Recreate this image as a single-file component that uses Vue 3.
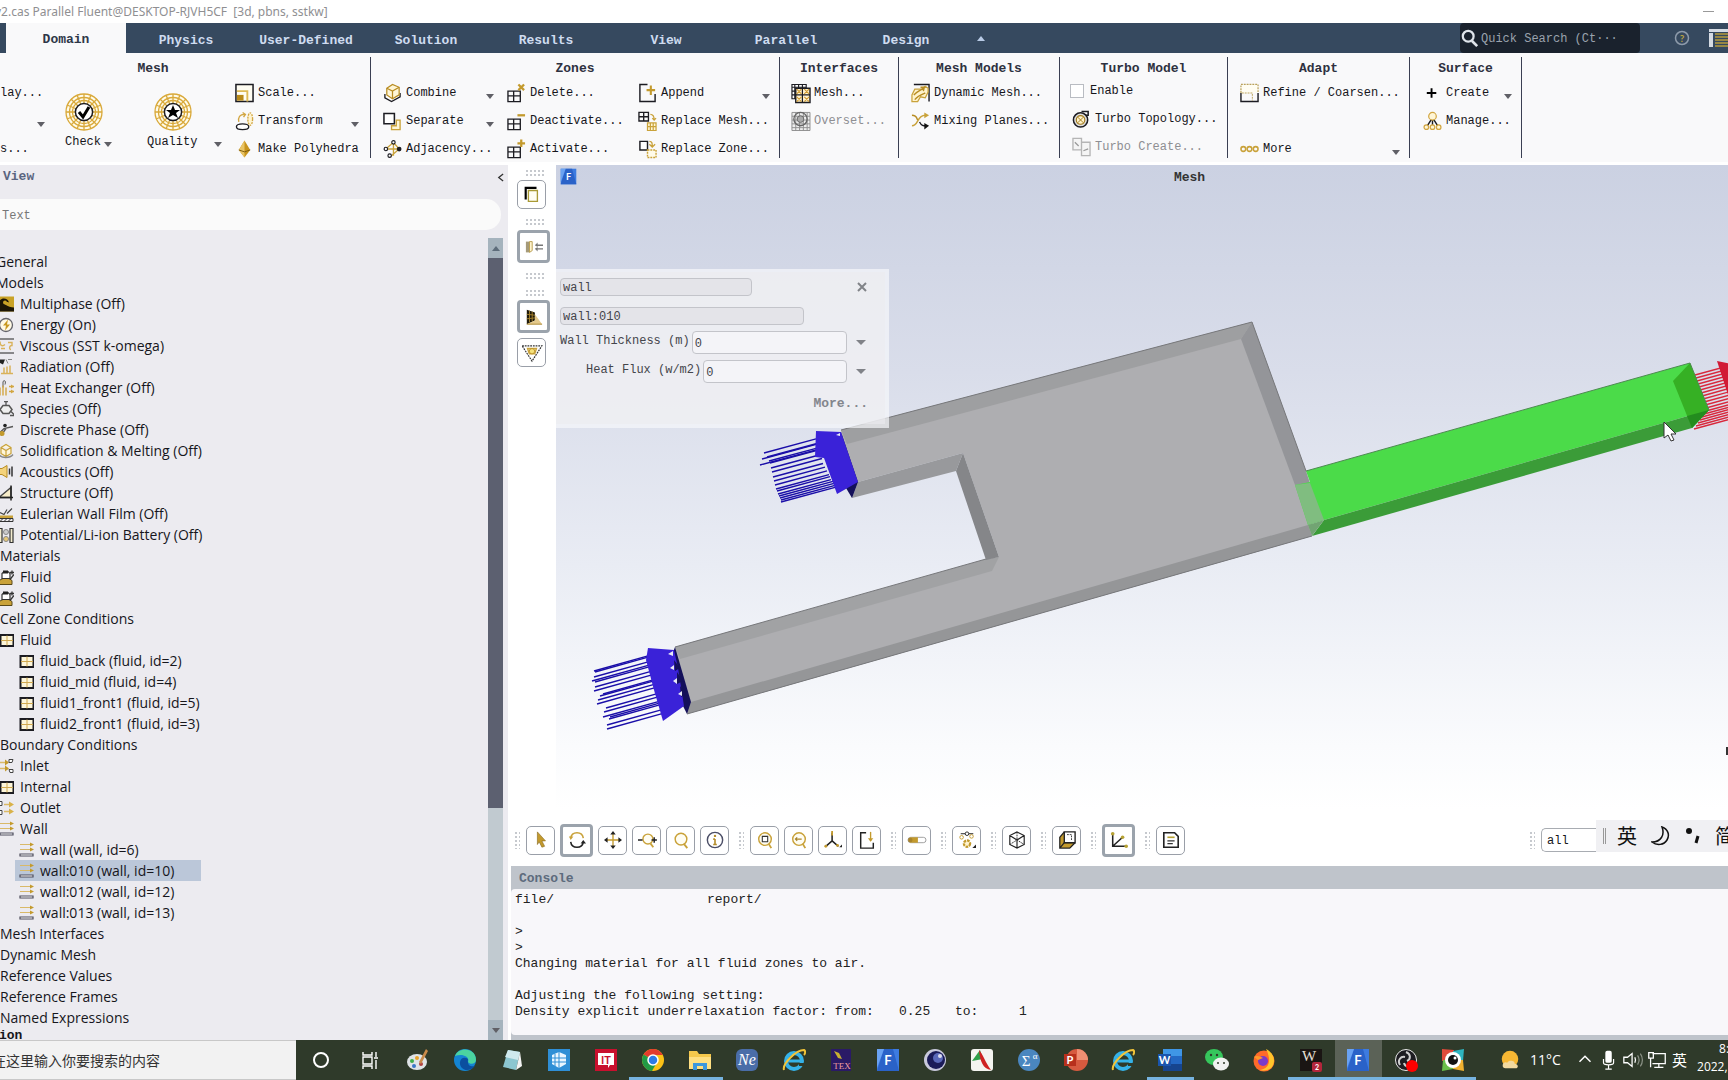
<script setup>
import { ref } from 'vue'

const tabs = ['Domain', 'Physics', 'User-Defined', 'Solution', 'Results', 'View', 'Parallel', 'Design']
const activeTab = ref('Domain')

const G = '#c39a2d'
const K = '#1c1c22'
const grid4 = `<path d="M1 8h13v11H1zM1 13h13M7 8v11" fill="none" stroke="${K}" stroke-width="1.4"/>`
const web = `<g fill="#fffbe9" stroke="#d9a93a" stroke-width="1.3"><ellipse cx="19" cy="19" rx="18" ry="18"/><circle cx="19" cy="19" r="14.5"/><circle cx="19" cy="19" r="11.5"/><path d="M19 1v36M1 19h36M6 6l26 26M32 6L6 32M12 2l14 34M26 2L12 36M2 12l34 14M2 26l34-14"/></g><circle cx="19" cy="19" r="8.6" fill="#fff" stroke="${K}" stroke-width="1.5"/>`
const cell = `<path d="M1.5 2.500h13v11h-13z" fill="#fdf6da" stroke="${K}" stroke-width="2"/><path d="M8 3v10M2 8h12" stroke="#d0a850"/>`
const flask = `<path d="M0 15v-4l4-2h6l3 2v4z" fill="#c9a23a" stroke="#5a4a1a"/><path d="M3 9V4l2-2h4l2 2v5z" fill="#fff" stroke="#333" stroke-width="1.2"/><path d="M4 1h5v3H4z" fill="#222"/><path d="M11 10l4-5M11 3h4M13 1v4" stroke="#333" stroke-width="1.3"/>`
const wallIcon = `<path d="M1 2h11M1 7h11" stroke="#d9b968" stroke-width="1.2"/><path d="M11 0l4 2-4 2zM11 5l4 2-4 2z" fill="${G}"/><path d="M1 11.500h13v2H1z" fill="#fff" stroke="#4c4c5c" stroke-width="1.2"/>`
const fluent = `<path d="M1 1h22v22H1z" fill="#3d7be0"/><path d="M1 23L8 1h9l6 22z" fill="#2a62c8"/><path d="M1 1h7L1 20z" fill="#6aa2f2"/><text x="12" y="17" font-size="13" font-weight="700" text-anchor="middle" fill="#fff" font-family="Lato, sans-serif">F</text>`
const icons = {
  check: web + `<path d="M14 19l4 5 6-10" fill="none" stroke="#000" stroke-width="3"/>`,
  quality: web + `<path d="M19 12l2 5h5l-4 3 2 5-5-3-5 3 2-5-4-3h5z" fill="#000"/>`,
  scale: `<path d="M1 1h18v18H1z" fill="#fffdf2" stroke="${K}" stroke-width="1.6"/><path d="M2 8h11v11" fill="none" stroke="#e0bb55" stroke-width="2"/><path d="M2 12h7v6H2z" fill="#b98a18"/>`,
  transform: `<ellipse cx="8" cy="16" rx="6.500" ry="3" fill="#fff" stroke="${K}" stroke-width="1.4"/><path d="M4 11c-1-5 1-8 6-8M8 1l3 2-2 3" fill="none" stroke="#d2a642" stroke-width="1.400"/><ellipse cx="16" cy="8" rx="2.500" ry="6.500" fill="#fff4cf" stroke="#d2a642" stroke-width="1.400" stroke-dasharray="2 1"/>`,
  poly: `<path d="M10 1l6 10-6 8-6-8z" fill="#c8941c"/><path d="M10 1v18L4 11z" fill="#e9c465"/><path d="M4 11l6 2 6-2" fill="none" stroke="#7b5a0c"/>`,
  combine: `<path d="M2 11v4l7 4 9-5v-4" fill="#fff" stroke="${K}" stroke-width="1.4"/><path d="M4 5l6-4 7 3v8l-7 4-6-4z" fill="#fff6d6" stroke="#b88c22" stroke-width="1.300"/><path d="M4 5l6 3 7-4M10 8v8" fill="none" stroke="#b88c22" stroke-width="1.300"/>`,
  separate: `<path d="M1 2h11v11H1z" fill="#fff" stroke="${K}" stroke-width="1.6"/><path d="M14 9h4v10H9v-4h5z" fill="#fff6d6" stroke="#c9a23a" stroke-width="1.400"/>`,
  adjacency: `<path d="M3 10h14M11 3v14M3 10l8-7 6 7-9 8" fill="none" stroke="#c9a23a" stroke-width="1.400"/><g fill="#fff" stroke="${K}" stroke-width="1.2"><circle cx="3" cy="10" r="1.800"/><circle cx="11" cy="3" r="1.800"/><circle cx="7" cy="17" r="1.800"/></g><circle cx="17" cy="10" r="2.500" fill="${K}"/>`,
  delete: grid4 + `<path d="M12 1l6 6M18 1l-6 6" stroke="${G}" stroke-width="2.4"/>`,
  deactivate: grid4 + `<path d="M11 4h8" stroke="${G}" stroke-width="2.4"/>`,
  activate: grid4 + `<path d="M11 4h8M15 0v8" stroke="${G}" stroke-width="2.4"/>`,
  append: `<path d="M10 1H2v18h16v-8" fill="none" stroke="${K}" stroke-width="1.5"/><path d="M9 7h9M13.500 2v10" stroke="${G}" stroke-width="2.200"/>`,
  replaceMesh: `<path d="M1 1h10v9H1zM1 5.500h10M6 1v9" fill="none" stroke="${K}" stroke-width="1.4"/><path d="M10 12h9v8h-9zM10 16h9M13 12v8M16 12v8" fill="#fff6d6" stroke="#c9a23a" stroke-width="1.300"/><path d="M13 3c3 0 4 2 4 6M15 7l2 2 2-2" fill="none" stroke="#c9a23a" stroke-width="1.300"/>`,
  replaceZone: `<path d="M2 2h8v9H2z" fill="#fff" stroke="${K}" stroke-width="1.5"/><path d="M10 11h9v8h-9z" fill="#fffbe9" stroke="#c9a23a" stroke-width="1.500" stroke-dasharray="2 1"/><path d="M12 2c3 0 3 2 3 6M12 5l3 3 3-3" fill="none" stroke="#c9a23a" stroke-width="1.400"/>`,
  ifMesh: `<path d="M1 1h15v15H1zM1 4h15M1 8h15M4 1v15M8 1v15M12 1v15M1 12h15" fill="#fff" stroke="${K}" stroke-width="1.200"/><path d="M5 5h15v15H5z" fill="#fff3d2" stroke="${K}" stroke-width="1.500"/><path d="M5 12h15M12 5v15" stroke="${K}" stroke-width="1.3"/><path d="M6 6l5 5M11 6l-5 5M14 6l5 5M19 6l-5 5M6 14l5 5M11 14l-5 5M14 14l5 5M19 14l-5 5" stroke="#cf9a30" stroke-width="1.100"/>`,
  overset: `<path d="M1 1h19v19H1zM1 5h19M1 9h19M1 13h19M1 17h19M5 1v19M9 1v19M13 1v19M17 1v19" fill="#eee" stroke="#8e8e8e"/><circle cx="10" cy="8" r="7" fill="none" stroke="#666" stroke-width="1.4"/><circle cx="10" cy="8" r="3.500" fill="#aaa" stroke="#666"/>`,
  dynamic: `<path d="M3 1h16v18" fill="none" stroke="${K}" stroke-width="1.5"/><path d="M1 19v-7l3-6h7l4-3 3 2v4l-3 6-5-1-3 5z" fill="#fff3cc" stroke="#c9a23a" stroke-width="1.300"/><path d="M3 12C7 8 9 8 13 5M10 4l4 0-1 4M4 17c3-4 6-5 11-7" fill="none" stroke="#b88c22" stroke-width="1.500"/>`,
  mixing: `<path d="M1 15C8 15 6 4 15 4" fill="none" stroke="#c9a23a" stroke-width="1.600"/><path d="M1 4c5 0 5 3 6 5" fill="none" stroke="#b88c22" stroke-width="1.500"/><path d="M9 11c2 4 4 4 7 4" fill="none" stroke="${K}" stroke-width="1.4"/><path d="M14 1l5 3-5 3z" fill="#c9a23a"/><path d="M14 12l5 3-5 4z" fill="#111"/>`,
  turbo: `<path d="M10 2h7v4h-3" fill="#fff" stroke="${K}" stroke-width="1.6"/><circle cx="9" cy="11" r="7.500" fill="#ddd" stroke="${K}" stroke-width="1.6"/><circle cx="9" cy="11" r="4.500" fill="#fff3cc" stroke="#a37a1a" stroke-width="1.2"/><path d="M6 8l6 6M12 8l-6 6" stroke="#a37a1a"/>`,
  turboCreate: `<path d="M1 1h9v12H1zM10 5h9v14h-9z" fill="#f5f5f5" stroke="#b5b5b5" stroke-width="1.4"/><path d="M3 5l4 4M12 14l5-2" stroke="#999" stroke-width="1.3"/>`,
  refine: `<path d="M1 10V1h18v9" fill="#fffdf2" stroke="#b9a15a" stroke-width="1.3" stroke-dasharray="2 1"/><path d="M1 10v9h18v-9" fill="none" stroke="${K}" stroke-width="1.5"/><path d="M2 10h11v8" fill="none" stroke="#b9a15a" stroke-dasharray="2 1"/>`,
  more: `<g fill="none" stroke="#c9a23a" stroke-width="1.6"><circle cx="3.500" cy="10" r="2.500"/><circle cx="10" cy="10" r="2.500"/><circle cx="16.500" cy="10" r="2.500"/></g>`,
  plus: `<path d="M4 10h10M9 5v10" stroke="#000" stroke-width="2"/>`,
  manage: `<path d="M9 8l-5 8M11 8l5 8M10 8v8" stroke="${K}" stroke-width="1.5"/><g fill="#fff6d6" stroke="#d2a642" stroke-width="1.3"><circle cx="10" cy="5" r="4"/><circle cx="3.500" cy="16.500" r="2.400"/><circle cx="10" cy="16.500" r="2.400"/><circle cx="16.500" cy="16.500" r="2.400"/></g>`,
  // outline tree
  multiphase: `<path d="M0 0h15v15H0z" fill="#c9a227"/><path d="M0 15V5c3-5 9-3 10 1-3-1-4 0-4 2 3 2 6 3 9 3v4z" fill="#1d1606"/><circle cx="6" cy="6" r="2" fill="#c9a227"/>`,
  energy: `<circle cx="7" cy="7.500" r="6.500" fill="#fff9e4" stroke="#63636b" stroke-width="1.300"/><path d="M9 2L4 8h3l-1 5 5-6H8z" fill="#c89820"/>`,
  viscous: `<path d="M0 .5h15M0 14.500h15" stroke="#222"/><path d="M1 3c0 5 3 5 5 3M9 4h4v3c-3 0-3 4-1 4M2 10h4" fill="none" stroke="#d9b25a" stroke-width="1.400"/>`,
  radiation: `<path d="M0 0h6L4 5 0 3z" fill="#222"/><path d="M7 0l2 4M9 0h4" stroke="#888"/><path d="M5 14V8M8 14V7M11 14V6M2 14h12" stroke="#d9b25a" stroke-width="1.500"/>`,
  heatex: `<path d="M4 7V1c2-2 3 0 2 3" fill="none" stroke="#555"/><path d="M1 15V7M4 15V5M7 15V7M10 6h5M10 11h5" stroke="#d2a642" stroke-width="1.400"/><path d="M12 4l3 2-3 2M12 9l3 2-3 2" fill="#d2a642"/>`,
  species: `<path d="M4 4h6l3 4-3 4H4L1 8z" fill="#eee" stroke="#555" stroke-width="1.500"/><path d="M7 4V0M5 0h4M12 10l3 3M11 14h4" stroke="#555" stroke-width="1.300"/>`,
  discrete: `<path d="M0 11l5-5 9-2M2 13l5-7" fill="none" stroke="#555" stroke-width="1.300"/><circle cx="6" cy="3" r="1.800" fill="#222"/><circle cx="3" cy="11" r="2.500" fill="#c39a2d"/>`,
  solidif: `<path d="M2 4l5-3 5 3v6l-5 3-5-3zM2 4l5 3 5-3M7 7v6" fill="#fff6da" stroke="#c9a23a" stroke-width="1.200"/><path d="M0 11c2 4 11 4 14 0" fill="none" stroke="#888" stroke-width="1.300"/>`,
  acoustics: `<path d="M0 4h3l5-3v12l-5-3H0z" fill="#f4d37c" stroke="#b88c22"/><path d="M10.500 4v6M13 2v10" stroke="#333" stroke-width="1.500"/>`,
  structure: `<path d="M0 12L12 2v10z" fill="#f7ecc8" stroke="#444" stroke-width="1.300"/><path d="M0 12h14M12 0v15" stroke="#222" stroke-width="1.500"/>`,
  film: `<path d="M1 6l4 2 3-5M8 7l5-5" fill="none" stroke="#444" stroke-width="1.200"/><path d="M0 9h14v3H0z" fill="#c9a23a"/><path d="M0 15h14M1 15l3-3M5 15l3-3M9 15l3-3M0 12h14v3" fill="none" stroke="#333"/>`,
  battery: `<path d="M0 1h3v14H0zM11 1h3v14h-3z" fill="#f3eccf" stroke="#333" stroke-width="1.200"/><circle cx="7" cy="4.500" r="2.500" fill="#ccc" stroke="#888"/><circle cx="7" cy="11.500" r="2.500" fill="#e8c976" stroke="#888"/>`,
  flask, cell, wall: wallIcon,
  inlet: `<path d="M0 4h9M0 10h9" stroke="#d9b968" stroke-width="1.300"/><path d="M6 1l4 3-4 3zM6 7l4 3-4 3z" fill="${G}"/><path d="M10 1h4l-1 3h-3zM10 11h4v3h-3z" fill="#fff" stroke="#444"/>`,
  outlet: `<path d="M5 4h8M5 11h8" stroke="#d9b968" stroke-width="1.300"/><path d="M10 1l5 3-5 3zM10 8l5 3-5 3z" fill="#d9b24a"/><path d="M0 1h3v4H0zM0 10h3v4H0z" fill="#fff" stroke="#444"/>`,
  // view tools
  layers: `<path d="M3 15V2h12" fill="none" stroke="#000" stroke-width="2.4"/><path d="M6 5h10v12H6z" fill="#fffef2" stroke="#a99a35" stroke-width="1.500"/>`,
  slab: `<path d="M1 4h4v12H1z" fill="#a59a7a"/><path d="M5 4h3v10l-3 2z" fill="#fff3cc" stroke="#b59a4a"/><path d="M12 8h8M12 12h8" stroke="#777" stroke-width="1.500"/><path d="M14 5l-3 3 3 2zM14 10l-3 2 3 3z" fill="#777"/>`,
  wallmesh: `<path d="M2 2l9 3v9l-9 4z" fill="#1f1a0a"/><path d="M5 3v13M8 4v11M2 7l9 1M2 12l9-1" stroke="#a8832a"/><path d="M11 7l8 11H2l9-4z" fill="#e3c98c"/><path d="M2 18h17" stroke="#a8832a"/>`,
  funnel: `<path d="M-1 2h22L10 19z" fill="none" stroke="#333" stroke-width="1.300" stroke-dasharray="2 1"/><path d="M5 5h10l-2 6H7z" fill="#fff3cc" stroke="#c9a23a" stroke-width="1.500"/><circle cx="10" cy="8" r="3" fill="#f6e27a" stroke="#b88c22"/>`,
  pointer: `<path d="M6 1l9 10h-4l3 6-3 1-3-6-2 3z" fill="${G}" stroke="#8a6a1c" stroke-width=".7"/>`,
  rotate: `<path d="M3 8c1-8 13-8 14 0" fill="none" stroke="#c9a23a" stroke-width="1.700"/><path d="M17 12c-1 8-13 8-14 0" fill="none" stroke="#222" stroke-width="1.700"/><path d="M1 6h5l-3 4z" fill="#c9a23a"/><path d="M14 14l3-4 3 4z" fill="#222"/>`,
  pan: `<path d="M3 10h14M10 3v14" stroke="${G}" stroke-width="1.500"/><path d="M0 10l4-3v6zM20 10l-4-3v6zM10 0l3 4H7zM10 20l3-4H7z" fill="#222"/>`,
  zoom: `<circle cx="11" cy="9" r="5.500" fill="#fffdf2" stroke="#c9a23a" stroke-width="1.600"/><path d="M14 14l3 4" stroke="#c9a23a" stroke-width="2"/><path d="M0 10h5M15 10h6M18 7v6" stroke="#222" stroke-width="1.600"/>`,
  lens: `<circle cx="10" cy="9" r="6.500" fill="#fffdf2" stroke="#c9a23a" stroke-width="1.600"/><path d="M13 14l4 5" stroke="#c9a23a" stroke-width="2"/>`,
  info: `<circle cx="10" cy="10" r="8.500" fill="#fff" stroke="#4b4e66" stroke-width="1.600"/><path d="M10 9v6M8 9h2M8 15h4" stroke="#b58d2a" stroke-width="1.800"/><circle cx="10" cy="5.500" r="1.300" fill="#b58d2a"/>`,
  fit: `<circle cx="10" cy="9" r="7" fill="#fffdf2" stroke="#c9a23a" stroke-width="1.600"/><path d="M14 14l3 5" stroke="#c9a23a" stroke-width="2"/><path d="M7 6h6v6H7z" fill="#fff" stroke="#333" stroke-width="1.200"/>`,
  back: `<circle cx="10" cy="9" r="7" fill="#fffdf2" stroke="#c9a23a" stroke-width="1.600"/><path d="M14 14l3 5" stroke="#c9a23a" stroke-width="2"/><path d="M6 9h7M8 7L6 9l2 2" fill="none" stroke="#a8832a" stroke-width="1.300"/>`,
  triad: `<path d="M9 2v9l-7 6M9 11l7 6" fill="none" stroke="#222" stroke-width="1.700"/><path d="M9 0v5" stroke="${G}" stroke-width="2"/><circle cx="2" cy="17" r="1.600" fill="${G}"/><circle cx="15" cy="16" r="1.600" fill="${G}"/><path d="M17 18h3v-3z" fill="#222"/>`,
  save: `<path d="M9 2H3v17h14v-6" fill="none" stroke="#222" stroke-width="1.600"/><path d="M14 1v10" stroke="${G}" stroke-width="1.500"/><path d="M11 8l3 4 3-4z" fill="${G}"/>`,
  slider: `<rect x="0" y="7" width="20" height="6" rx="3" fill="#fff" stroke="#999"/><path d="M2 7h9v6H2z" fill="${G}"/><circle cx="2.500" cy="10" r="2.500" fill="#a8832a"/>`,
  lights: `<path d="M3 3h14" stroke="#444" stroke-width="1.300"/><circle cx="10" cy="3" r="2" fill="#fff" stroke="#222"/><circle cx="4" cy="7" r="2" fill="none" stroke="${G}"/><circle cx="15" cy="6" r="2" fill="none" stroke="${G}"/><circle cx="10" cy="14" r="3.500" fill="#fff3cc" stroke="${G}" stroke-width="2.500" stroke-dasharray="3 1"/><path d="M16 19h4v-4z" fill="#222"/>`,
  cube: `<path d="M10 1l8 4v10l-8 4-8-4V5zM2 5l8 5 8-5M10 10v9" fill="none" stroke="#222" stroke-width="1.300"/><path d="M10 1v9M2 15l8-5 8 5" fill="none" stroke="#222" stroke-dasharray="2 1"/>`,
  box: `<path d="M7 1h12v12l-5 6H2V7z" fill="${G}"/><path d="M7 1h12v12H7z" fill="#fff" stroke="#222" stroke-width="1.500"/><path d="M7 1L2 7v12h11l6-6M2 19l5-6M7 13h12" fill="none" stroke="#222" stroke-width="1.400"/><path d="M10 4h5v6" fill="none" stroke="#333" stroke-dasharray="2 1"/>`,
  axes: `<path d="M3 3v14h14M3 17L14 7" fill="none" stroke="#222" stroke-width="1.700"/><circle cx="3" cy="3" r="2" fill="#b7a234"/><circle cx="14" cy="7" r="2" fill="#b7a234"/><circle cx="18" cy="17" r="2" fill="#b7a234"/>`,
  note: `<path d="M2 2h12l4 4v12H2z" fill="#fff" stroke="#222" stroke-width="1.800"/><path d="M6 7h8" stroke="#b7a234" stroke-width="1.800"/><path d="M6 11h8M6 14h6" stroke="#333" stroke-width="1.300"/>`,
  // task bar
  cortana: `<circle cx="12" cy="12" r="7" fill="none" stroke="#fff" stroke-width="2"/>`,
  taskview: `<path d="M5 4v3h9V4M5 9h9v7H5zM5 21v-3h9v3M18 4v5M18 12v9M16 10h4" fill="none" stroke="#fff" stroke-width="1.400"/>`,
  paint: `<ellipse cx="11" cy="14" rx="10" ry="8" fill="#dfe3e6"/><circle cx="6" cy="13" r="2" fill="#3fae49"/><circle cx="11" cy="10" r="2" fill="#e8a22a"/><circle cx="8" cy="18" r="2" fill="#3b78c8"/><circle cx="15" cy="16" r="2" fill="#b04040"/><path d="M20 1l2 2-7 13-2-2z" fill="#c98a4a"/>`,
  edge: `<circle cx="12" cy="12" r="11" fill="#1484d2"/><path d="M2 8C6-2 23 0 23 12c0 4-6 5-8 2 2-5-5-9-13-6z" fill="#4bd3a0"/><path d="M7 14c1-5 5-5 8-3-1 7 3 8 7 7-7 8-16 3-15-4z" fill="#0b4f9f"/>`,
  notes: `<path d="M8 2l12 2-4 18-13-3z" fill="#8cc6d0"/><path d="M8 2l12 2-2 8L5 9z" fill="#cfe9ee"/><path d="M16 22l4-18 2 14z" fill="#f3f3f3"/>`,
  blue: `<path d="M1 1h22v22H1z" fill="#2f8fd6"/><path d="M12 4l7 3v9l-7 4-7-4V7z" fill="#eaf6ff"/><path d="M12 4v16M5 10h14M5 14h14M8 6v12" stroke="#2f8fd6"/>`,
  it: `<path d="M1 1h22v22H1z" fill="#c8102e"/><path d="M4 5h16v12h-4l-2 3v-3H4z" fill="#fff"/><text x="12" y="15.500" font-size="11" font-weight="700" text-anchor="middle" fill="#c8102e" font-family="Lato, sans-serif">IT</text>`,
  chrome: `<circle cx="12" cy="12" r="11" fill="#fbc116"/><path d="M12 12L2.500 6.500A11 11 0 0 1 21.500 6.500L22 7H12z" fill="#e33b2e"/><path d="M12 12L2.500 6.500A11 11 0 0 0 11 23l4-7z" fill="#229a45"/><circle cx="12" cy="12" r="5" fill="#2f7be6" stroke="#fff" stroke-width="1.500"/>`,
  folder: `<path d="M1 3h8l2 3h12v15H1z" fill="#f5c84c"/><path d="M1 9h22v12H1z" fill="#ffdf82"/><path d="M5 22v-7h14v7h-4v-4H9v4z" fill="#3d97dd"/>`,
  ne: `<rect x="1" y="1" width="22" height="22" rx="6" fill="#4a6da8"/><text x="12" y="17" font-size="16" font-style="italic" text-anchor="middle" fill="#fff" font-family="Liberation Serif, serif">Ne</text>`,
  ie: `<circle cx="12" cy="13" r="8" fill="none" stroke="#35b2e8" stroke-width="4"/><path d="M6 13h14" stroke="#35b2e8" stroke-width="3"/><path d="M2 22C0 16 14 2 22 2c2 1 1 4 0 5" fill="none" stroke="#f2c53a" stroke-width="2"/><path d="M17 15h6v3h-6z" fill="#2f3a2a"/>`,
  tex: `<path d="M2 1h20v22H2z" fill="#2a1a66"/><path d="M5 3l4 7 4 1-3-6z" fill="#c8b030"/><text x="13" y="21" font-size="9" text-anchor="middle" fill="#f0a0a0" font-family="Liberation Serif, serif">TEX</text>`,
  fluent,
  orb: `<circle cx="12" cy="12" r="11" fill="#c9c9dc"/><circle cx="13" cy="12" r="9" fill="#1b1b58"/><circle cx="15" cy="10" r="5" fill="#5a68b8"/><circle cx="17" cy="8" r="2" fill="#dde"/>`,
  bands: `<rect x="1" y="1" width="22" height="22" rx="3" fill="#f4f4f0"/><path d="M2 13L10 2l3 9z" fill="#2fa04a"/><path d="M9 2c4 4 6 12 12 20-8-1-11-9-12-20z" fill="#cf2222"/>`,
  sigma: `<circle cx="12" cy="12" r="11" fill="#4a86bf"/><text x="9" y="18" font-size="15" text-anchor="middle" fill="#fff" font-family="Liberation Serif, serif">Σ</text><text x="18" y="11" font-size="9" text-anchor="middle" fill="#fff" font-family="Liberation Serif, serif">α</text>`,
  ppt: `<circle cx="13" cy="12" r="11" fill="#d65a3f"/><path d="M13 1a11 11 0 0 1 11 11H13z" fill="#f08f73"/><path d="M0 6h12v12H0z" fill="#b7301c"/><text x="6" y="16" font-size="11" font-weight="700" text-anchor="middle" fill="#fff" font-family="Lato, sans-serif">P</text>`,
  word: `<path d="M5 1h19v22H5z" fill="#3f96e6"/><path d="M5 8h19v8H5z" fill="#2368c4"/><path d="M5 16h19v7H5z" fill="#16458f"/><path d="M0 6h13v12H0z" fill="#1a55ad"/><text x="6.500" y="16" font-size="11" font-weight="700" text-anchor="middle" fill="#fff" font-family="Lato, sans-serif">W</text>`,
  wechat: `<ellipse cx="9" cy="9" rx="9" ry="8" fill="#36c65c"/><ellipse cx="16" cy="16" rx="8" ry="6.500" fill="#f1f1f1"/><g fill="#2f3a2a"><circle cx="6" cy="7" r="1.200"/><circle cx="12" cy="7" r="1.200"/><circle cx="13" cy="15" r="1"/><circle cx="19" cy="15" r="1"/></g>`,
  firefox: `<circle cx="12" cy="13" r="10.500" fill="#ff6a2b"/><path d="M14 1c8 4 10 12 6 18-4 4-8 4-12 3 9-1 12-9 6-21z" fill="#ffc52b"/><circle cx="11" cy="13" r="5" fill="#7a3ac8"/><path d="M2 9c2-2 6-1 9 1l-5 2z" fill="#ff9a2b"/>`,
  wsim: `<path d="M1 1h22v22H1z" fill="#1a1513"/><text x="10" y="13" font-size="15" text-anchor="middle" fill="#e8e0d8" font-family="Liberation Serif, serif">W</text><rect x="13" y="14" width="10" height="10" rx="2" fill="#b3263c"/><text x="18" y="22" font-size="7" font-weight="700" text-anchor="middle" fill="#fff" font-family="Lato, sans-serif">2</text>`,
  obs: `<circle cx="12" cy="12" r="10.500" fill="#1d1d22" stroke="#e8e8e8"/><path d="M12 4c5 2 5 7 1 9M6 17c-3-5 1-9 5-8M19 15c-3 5-8 4-9 0" fill="none" stroke="#cfcfcf" stroke-width="2"/><circle cx="18" cy="18" r="6" fill="#f00"/>`,
  eye: `<path d="M1 1l12 1-1 10-11 1z" fill="#e04a3a"/><path d="M12 3l11-2-1 12-10-1z" fill="#2fb5c0"/><path d="M12 12l10 0 1 11-11-2z" fill="#f0b030"/><path d="M2 12h10v9L1 23z" fill="#6abf4a"/><circle cx="12" cy="12" r="8" fill="#fff"/><circle cx="12" cy="12" r="5" fill="#111"/><circle cx="14" cy="10" r="1.500" fill="#fff"/>`,
  weather: `<circle cx="12" cy="11" r="9" fill="#f7b733"/><path d="M4 18c0-4 4-4 5-3 2-4 9-2 8 1 4 0 5 5 1 5H7c-2 0-3-1-3-3z" fill="#f2d9a0"/>`,
  up: `<path d="M6 14l6-6 6 6" fill="none" stroke="#fff" stroke-width="1.600"/>`,
  mic: `<rect x="8" y="2" width="7" height="13" rx="2" fill="#fff"/><path d="M6 11v4c0 3 11 3 11 0v-4M11.500 17v5M8 22h7" fill="none" stroke="#fff" stroke-width="1.300"/>`,
  speaker: `<path d="M2 9h4l5-4v14l-5-4H2z" fill="none" stroke="#fff" stroke-width="1.400"/><path d="M14 9c1 2 1 4 0 6" fill="none" stroke="#fff" stroke-width="1.400"/><path d="M17 7c2 3 2 7 0 10M20 5c3 4 3 10 0 14" fill="none" stroke="#8d9488" stroke-width="1.300"/>`,
  monitor: `<path d="M7 5h14v11H7M14 16v4M9 20h10M3 4h5v6H3zM5 10v10" fill="none" stroke="#fff" stroke-width="1.400"/>`,
}

const zones = [
  [{ i: 'combine', t: 'Combine', a: true }, { i: 'separate', t: 'Separate', a: true }, { i: 'adjacency', t: 'Adjacency...' }],
  [{ i: 'delete', t: 'Delete...' }, { i: 'deactivate', t: 'Deactivate...' }, { i: 'activate', t: 'Activate...' }],
  [{ i: 'append', t: 'Append', a: true }, { i: 'replaceMesh', t: 'Replace Mesh...' }, { i: 'replaceZone', t: 'Replace Zone...' }],
]
const groups = [
  { key: 'zones', title: 'Zones', cols: zones },
  { key: 'interfaces', title: 'Interfaces', cols: [[{ i: 'ifMesh', t: 'Mesh...' }, { i: 'overset', t: 'Overset...', off: true }]] },
  { key: 'models', title: 'Mesh Models', cols: [[{ i: 'dynamic', t: 'Dynamic Mesh...' }, { i: 'mixing', t: 'Mixing Planes...' }]] },
  { key: 'turbo', title: 'Turbo Model', cols: [[{ check: true, t: 'Enable' }, { i: 'turbo', t: 'Turbo Topology...' }, { i: 'turboCreate', t: 'Turbo Create...', off: true }]] },
  { key: 'adapt', title: 'Adapt', cols: [[{ i: 'refine', t: 'Refine / Coarsen...' }, null, { i: 'more', t: 'More', a: true }]] },
  { key: 'surface', title: 'Surface', cols: [[{ i: 'plus', t: 'Create', a: true }, { i: 'manage', t: 'Manage...' }]] },
]
const meshTools = [{ i: 'scale', t: 'Scale...' }, { i: 'transform', t: 'Transform', a: true }, { i: 'poly', t: 'Make Polyhedra' }]

const tree = [
  { l: 0, t: 'General', cut: true }, { l: 0, t: 'Models', cut: true },
  { l: 1, i: 'multiphase', t: 'Multiphase (Off)' }, { l: 1, i: 'energy', t: 'Energy (On)' },
  { l: 1, i: 'viscous', t: 'Viscous (SST k-omega)' }, { l: 1, i: 'radiation', t: 'Radiation (Off)' },
  { l: 1, i: 'heatex', t: 'Heat Exchanger (Off)' }, { l: 1, i: 'species', t: 'Species (Off)' },
  { l: 1, i: 'discrete', t: 'Discrete Phase (Off)' }, { l: 1, i: 'solidif', t: 'Solidification & Melting (Off)' },
  { l: 1, i: 'acoustics', t: 'Acoustics (Off)' }, { l: 1, i: 'structure', t: 'Structure (Off)' },
  { l: 1, i: 'film', t: 'Eulerian Wall Film (Off)' }, { l: 1, i: 'battery', t: 'Potential/Li-ion Battery (Off)' },
  { l: 0, t: 'Materials' }, { l: 1, i: 'flask', t: 'Fluid' }, { l: 1, i: 'flask', t: 'Solid' },
  { l: 0, t: 'Cell Zone Conditions' }, { l: 1, i: 'cell', t: 'Fluid' },
  { l: 2, i: 'cell', t: 'fluid_back (fluid, id=2)' }, { l: 2, i: 'cell', t: 'fluid_mid (fluid, id=4)' },
  { l: 2, i: 'cell', t: 'fluid1_front1 (fluid, id=5)' }, { l: 2, i: 'cell', t: 'fluid2_front1 (fluid, id=3)' },
  { l: 0, t: 'Boundary Conditions' }, { l: 1, i: 'inlet', t: 'Inlet' }, { l: 1, i: 'cell', t: 'Internal' },
  { l: 1, i: 'outlet', t: 'Outlet' }, { l: 1, i: 'wall', t: 'Wall' },
  { l: 2, i: 'wall', t: 'wall (wall, id=6)' }, { l: 2, i: 'wall', t: 'wall:010 (wall, id=10)' },
  { l: 2, i: 'wall', t: 'wall:012 (wall, id=12)' }, { l: 2, i: 'wall', t: 'wall:013 (wall, id=13)' },
  { l: 0, t: 'Mesh Interfaces' }, { l: 0, t: 'Dynamic Mesh' }, { l: 0, t: 'Reference Values' },
  { l: 0, t: 'Reference Frames' }, { l: 0, t: 'Named Expressions' },
]
const selected = ref('wall:010 (wall, id=10)')

const sideTools = ['|', 'layers', '|', '*slab', '|', '|', '*wallmesh', 'funnel']
const viewTools = ['|', 'pointer', '*rotate', 'pan', 'zoom', 'lens', 'info', '|', 'fit', 'back', 'triad', 'save', '|', 'slider', '|', 'lights', '|', 'cube', '|', 'box', '|', '*axes', '|', 'note']

const taskIcons = ['cortana', 'taskview', 'paint', 'edge', 'notes', 'blue', 'it', 'chrome', 'folder', 'ne', 'ie', 'tex', 'fluent', 'orb', 'bands', 'sigma', 'ppt', 'ie', 'word', 'wechat', 'firefox', 'wsim', 'fluent', 'obs', 'eye']
const running = [7, 8, 18, 21, 22, 23, 24]

// boundary arrows: [start x, start y, length]
const inletA = [[764, 453, 52], [762, 459, 56], [767, 457, 50], [769, 461, 48], [760, 465, 60], [770, 463, 50], [771, 468, 50], [772, 472, 50], [773, 477, 50], [774, 481, 51], [775, 485, 52], [776, 489, 53], [777, 491, 53], [778, 494, 53], [779, 496, 54], [780, 498, 54], [781, 500, 55], [781, 502, 55]]
const inletB = [[594, 671, 54], [595, 672, 54], [594, 677, 55], [592, 681, 58], [595, 682, 54], [595, 687, 56], [594, 691, 58], [600, 696, 54], [603, 694, 52], [598, 700, 58], [597, 704, 60], [606, 708, 54], [604, 712, 56], [603, 717, 58], [609, 719, 56], [610, 717, 52], [607, 725, 56], [607, 729, 56]]
const outlet = Array.from({ length: 19 }, (_, n) => [n < 12 ? 1695 + n : 1706 - (n - 12) * 2, 375 + n * 3])
</script>

<template>
  <div class="app">
    <header class="titlebar">
      <span class="title">v2.cas Parallel Fluent@DESKTOP-RJVH5CF&nbsp; [3d, pbns, sstkw]</span>
      <button class="minimize" aria-label="Minimize"></button>
    </header>

    <nav class="tabs">
      <button v-for="t in tabs" :key="t" class="tab" :class="{ on: t === activeTab }" @click="activeTab = t">{{ t }}</button>
      <button class="collapse" aria-label="Collapse ribbon"><i class="tri up pale"></i></button>
      <label class="quick">
        <svg viewBox="0 0 20 20" width="18" height="20"><circle cx="8" cy="8" r="6" fill="none" stroke="#dfe4ea" stroke-width="2.5" /><path d="M12 13l6 6" stroke="#dfe4ea" stroke-width="3" /></svg>
        <input placeholder="Quick Search (Ct···" aria-label="Quick Search" />
      </label>
      <button class="navicon" aria-label="Help">
        <svg viewBox="0 0 16 16" width="16" height="16"><circle cx="8" cy="8" r="6.500" fill="none" stroke="#8e9bab" stroke-width="1.500" /><text x="8" y="11.500" text-anchor="middle" font-size="10" font-weight="700" fill="#b8a040" font-family="Lato, sans-serif">?</text></svg>
      </button>
      <button class="navicon last" aria-label="Arrange">
        <svg viewBox="0 0 20 20" width="20" height="20"><path d="M1 1h19v3H1zM1 5h4v14H1z" fill="#d5dbe3" /><path d="M7 6h13M7 9h13M7 12h13M7 15h13M7 18h13" stroke="#b79b3c" stroke-width="1.500" /></svg>
      </button>
    </nav>

    <section class="ribbon">
      <div class="group mesh">
        <h2>Mesh</h2>
        <div class="body">
          <div class="col first">
            <button class="item">lay...</button>
            <button class="item end" aria-label="Info menu"><i class="tri"></i></button>
            <button class="item">s...</button>
          </div>
          <button class="big check"><svg viewBox="0 0 38 38" v-html="icons.check"></svg><span>Check<i class="tri"></i></span></button>
          <button class="big quality"><svg viewBox="0 0 38 38" v-html="icons.quality"></svg><span>Quality<i class="tri"></i></span></button>
          <div class="col">
            <button v-for="b in meshTools" :key="b.t" class="item"><svg viewBox="0 0 20 20" v-html="icons[b.i]"></svg>{{ b.t }}<i v-if="b.a" class="tri"></i></button>
          </div>
        </div>
      </div>
      <div v-for="g in groups" :key="g.key" class="group" :class="g.key">
        <h2>{{ g.title }}</h2>
        <div class="body">
          <div v-for="(c, n) in g.cols" :key="n" class="col">
            <template v-for="(b, m) in c" :key="m">
              <span v-if="!b"></span>
              <label v-else-if="b.check" class="item tick"><input type="checkbox" />{{ b.t }}</label>
              <button v-else class="item" :class="{ off: b.off }"><svg viewBox="0 0 20 20" v-html="icons[b.i]"></svg>{{ b.t }}<i v-if="b.a" class="tri"></i></button>
            </template>
          </div>
        </div>
      </div>
    </section>

    <main class="work">
      <aside class="outline">
        <div class="outline-head"><h2>View</h2><button aria-label="Collapse panel"><svg viewBox="0 0 8 10" width="7" height="9"><path d="M7 1L2 5l5 4" fill="none" stroke="#333" stroke-width="1.500" /></svg></button></div>
        <input class="filter" placeholder="Text" aria-label="Filter Text" />
        <div class="tree-wrap">
          <ul class="tree">
            <li v-for="(n, k) in tree" :key="k" :class="['l' + n.l, { sel: n.t === selected, cut: n.cut }]" @click="selected = n.t">
              <span class="node"><svg v-if="n.i" viewBox="0 0 15 15" v-html="icons[n.i]"></svg>{{ n.t }}</span>
            </li>
            <li class="l0 strong">ion</li>
          </ul>
          <div class="scroll">
            <button aria-label="Scroll up"><i class="tri up"></i></button>
            <div class="thumb"></div>
            <div class="track"></div>
            <button aria-label="Scroll down"><i class="tri"></i></button>
          </div>
        </div>
      </aside>

      <section class="right">
        <div class="upper">
          <div class="side">
            <template v-for="(s, n) in sideTools" :key="n">
              <i v-if="s === '|'" class="grip flat"></i>
              <button v-else class="tool" :class="{ on: s[0] === '*' }" :aria-label="s.replace('*', '')"><svg viewBox="0 0 20 20" v-html="icons[s.replace('*', '')]"></svg></button>
            </template>
          </div>
          <div class="viewport">
            <svg class="scene" viewBox="556 165 1172 645" preserveAspectRatio="xMinYMin slice">
              <g stroke="#1a0ea8" stroke-width="1.300">
                <path v-for="(a, n) in inletA" :key="n" :d="`M${a[0]} ${a[1]}l${a[2]} ${-a[2] * 0.27}`" />
                <path v-for="(a, n) in inletB" :key="n" :d="`M${a[0]} ${a[1]}l${a[2]} ${-a[2] * 0.28}`" />
              </g>
              <g stroke="#d8283c" stroke-width="1.400">
                <path v-for="(a, n) in outlet" :key="n" :d="`M${a[0]} ${a[1]}l40 -11`" />
              </g>
              <path d="M1717 361l14 3v40z" fill="#d11a35" />
              <!-- chamber -->
              <path d="M841 430L1252 322L1306 471L1312 536L687 714L675 647L999 557L963 453L858 482L852 498z" fill="#aeaeb1" />
              <path d="M841 430L1252 322L1241 339L847 444z" fill="#9e9fa1" />
              <path d="M1252 322L1306 471L1310 483L1295 485L1241 339z" fill="#949599" />
              <path d="M691 702L1308 525L1312 536L687 714z" fill="#959698" />
              <path d="M675 647L986 559L999 557L992 571L680 659z" fill="#a1a2a4" />
              <path d="M858 482L963 453L956 471L852 498z" fill="#98999c" />
              <path d="M963 453L999 557L986 560L956 471z" fill="#858689" />
              <path d="M841 430L1252 322L1306 471M675 647L986 559M687 714L1312 536" fill="none" stroke="#77787b" />
              <!-- outlet duct -->
              <path d="M1306 471L1690 363L1709 410L1324 520L1308 525L1295 485L1310 482z" fill="#4bdb49" />
              <path d="M1324 520L1709 410L1692 428L1312 536z" fill="#3b9c38" />
              <path d="M1295 485L1310 483L1324 520L1308 525z" fill="#80bd80" />
              <path d="M1308 525L1324 520L1312 536z" fill="#72a473" />
              <path d="M1690 363L1709 410L1692 428L1673 381z" fill="#36b024" />
              <path d="M1687 416L1709 410L1692 428z" fill="#238c1e" />
              <path d="M1306 471L1690 363L1709 410" fill="none" stroke="#4d8a50" />
              <!-- inlets -->
              <path d="M841 432L858 482L852 498L846 488z" fill="#14105a" />
              <path d="M816 431L841 432L858 482L837 494L824 458L815 457z" fill="#3a22d8" />
              <path d="M675 647L691 702L687 714L682 704L670 660z" fill="#14105a" />
              <path d="M648 648L674 650L678 668L684 706L663 721L654 690L646 660z" fill="#3a22d8" />
              <path d="M674 660l6 8-5 3zM677 672l6 9-6 3zM680 686l6 8-5 3z" fill="#14105a" />
              <path d="M668 654l5-3v5zM670 668l4-3v5zM673 681l4-3v6zM678 694l4-3v5zM836 435l4-2v3z" fill="#e8eaf6" />
              <path d="M1727 747v8" stroke="#333" stroke-width="2" />
              <path d="M1664 422v16l4-3 3 6 3-1-3-6h5z" fill="#fff" stroke="#333" />
            </svg>
            <svg class="badge" viewBox="0 0 24 24" v-html="icons.fluent"></svg>
            <h1>Mesh</h1>
            <form class="popup" @submit.prevent>
              <div class="row top">
                <input class="name" value="wall" aria-label="Zone type" />
                <button type="button" class="close" aria-label="Close"><svg viewBox="0 0 10 10" width="10" height="10"><path d="M1 1l8 8M9 1L1 9" stroke="#808388" stroke-width="2" /></svg></button>
              </div>
              <div class="row"><input class="zone" value="wall:010" aria-label="Zone name" /></div>
              <div class="row field"><label for="thick">Wall Thickness (m)</label><input id="thick" value="0" /><i class="tri"></i></div>
              <div class="row field flux"><label for="flux">Heat Flux (w/m2)</label><input id="flux" value="0" /><i class="tri"></i></div>
              <button type="button" class="morelink">More...</button>
            </form>
          </div>
        </div>
        <div class="toolbar">
          <template v-for="(s, n) in viewTools" :key="n">
            <i v-if="s === '|'" class="grip"></i>
            <button v-else class="tool" :class="{ on: s[0] === '*' }" :aria-label="s.replace('*', '')"><svg viewBox="0 0 20 20" v-html="icons[s.replace('*', '')]"></svg></button>
          </template>
          <i class="grip push"></i>
          <input class="all" value="all" aria-label="Surfaces" />
          <div class="ime">
            <i class="bars"></i><span>英</span>
            <svg viewBox="0 0 20 20" width="20" height="20"><path d="M11 1c6 2 8 8 5 13-3 5-10 6-15 2 9 0 13-7 10-15z" fill="none" stroke="#111" stroke-width="1.500" /></svg>
            <svg viewBox="0 0 16 20" width="16" height="20"><circle cx="4" cy="5" r="3" fill="#111" /><path d="M13 10l-2 7" stroke="#111" stroke-width="3" /></svg>
            <span>简</span>
          </div>
        </div>
        <div class="console">
          <h2>Console</h2>
          <div class="log">
            <p><span class="c24">file/</span><span>report/</span></p>
            <p></p>
            <p>&gt;</p>
            <p>&gt;</p>
            <p>Changing material for all fluid zones to air.</p>
            <p></p>
            <p>Adjusting the following setting:</p>
            <p><span class="c48">Density explicit underrelaxation factor: from:</span><span class="c7">0.25</span><span class="c8">to:</span><span>1</span></p>
          </div>
        </div>
      </section>
    </main>

    <footer class="taskbar">
      <input class="find" value="在这里输入你要搜索的内容" aria-label="搜索" />
      <div class="apps">
        <button v-for="(a, n) in taskIcons" :key="n" :class="{ run: running.includes(n), cur: n === 22 }" :aria-label="a"><svg viewBox="0 0 24 24" v-html="icons[a]"></svg></button>
      </div>
      <div class="tray">
        <svg viewBox="0 0 24 24" v-html="icons.weather"></svg>
        <span class="temp">11°C</span>
        <svg viewBox="0 0 24 24" v-html="icons.up"></svg>
        <svg viewBox="0 0 24 24" v-html="icons.mic"></svg>
        <svg viewBox="0 0 24 24" v-html="icons.speaker"></svg>
        <svg viewBox="0 0 24 24" v-html="icons.monitor"></svg>
        <span class="lang">英</span>
      </div>
      <div class="clock"><span class="time">8:</span><span>2022,</span></div>
    </footer>
  </div>
</template>

<style>
body { margin: 0; overflow: hidden; }
</style>

<style scoped>
.app { display: flex; flex-direction: column; min-height: 100vh; overflow: hidden; background: #fff; color: #16161a; font: 12px/16px "Liberation Mono", monospace; }
h1, h2, p, ul { margin: 0; padding: 0; list-style: none; }
button { border: 0; background: none; padding: 0; font: inherit; color: inherit; }
input { font: inherit; color: inherit; box-sizing: border-box; min-width: 0; outline: 0; }
svg { flex: none; display: block; }
.tri { flex: none; width: 0; height: 0; border: 4px solid transparent; border-top: 5px solid #606066; border-bottom: 0; }
.tri.up { border-top: 0; border-bottom: 5px solid #5d6c7a; }
.tri.pale { border-bottom-color: #b9cbe6; }

.titlebar { display: flex; justify-content: space-between; align-items: center; height: 23px; padding-right: 14px; color: #8f8f92; font: 12px/24px "Noto Sans", sans-serif; }
.title { margin-left: -5px; white-space: nowrap; }
.minimize { width: 11px; height: 1px; background: #999; }

.tabs { display: flex; height: 30px; padding-left: 6px; background: #36495f; color: #cfdcf0; font-size: 13px; font-weight: 700; }
.tab { width: 120px; padding-top: 5px; }
.tab.on { background: #f9f9fa; color: #2e3748; padding-top: 3px; }
.collapse { width: 30px; display: flex; justify-content: center; align-items: center; }
.quick { display: flex; align-items: center; width: 180px; margin-left: auto; border-radius: 4px; background: #1a222d; font-size: 12px; font-weight: 400; }
.quick svg { margin-left: 1px; }
.quick input { border: 0; background: none; width: 150px; padding: 2px 0 0 2px; }
.quick input::placeholder { color: #9aa3ae; opacity: 1; }
.navicon { display: flex; align-items: center; width: 20px; margin-left: 34px; }
.navicon.last { margin-left: 14px; }

.ribbon { display: flex; height: 109px; background: #f9f9fa; border-bottom: 3px solid #fff; }
.group { flex: none; box-sizing: border-box; height: 101px; margin-top: 4px; border-right: 1px solid #3a3f52; }
.group h2 { height: 21px; text-align: center; font-size: 13px; line-height: 24px; color: #2e3140; }
.mesh { width: 371px; } .mesh h2 { padding-right: 64px; }
.zones { width: 409px; padding-left: 12px; } .zones h2 { padding-right: 12px; }
.interfaces { width: 119px; padding-left: 11px; } .interfaces h2 { padding-right: 11px; }
.models { width: 161px; padding-left: 12px; } .models h2 { padding-right: 12px; }
.turbo { width: 168px; padding-left: 12px; } .turbo h2 { padding-right: 12px; }
.adapt { width: 182px; padding-left: 12px; } .adapt h2 { padding-right: 12px; }
.surface { width: 112px; padding-left: 13px; } .surface h2 { padding-right: 13px; }
.body { display: flex; }
.col { display: grid; grid-template-rows: repeat(3, 28px); align-content: start; }
.turbo .col { grid-template-rows: 25px 29px 28px; }
.item { display: flex; align-items: center; gap: 4px; padding-top: 2px; white-space: nowrap; text-align: left; }
.item svg { width: 19px; height: 20px; overflow: visible; }
.item .tri { margin-left: auto; margin-top: 6px; }
.item.off { color: #8e8e92; }
.item.end { justify-content: flex-end; }
.first { width: 45px; margin-right: 20px; }
.mesh .col:last-child { margin-left: 14px; width: 124px; }
.big { display: flex; flex-direction: column; align-items: flex-start; height: 62px; padding-top: 14px; }
.big svg { width: 38px; height: 40px; }
.big span { display: flex; align-items: center; gap: 3px; margin-top: 2px; }
.big .tri { margin-top: 4px; }
.big.check { width: 82px; }
.big.quality { width: 74px; }
.big.quality svg { margin-left: 7px; }
.big.quality span { gap: 17px; }
.zones .col:nth-child(1) { width: 111px; margin-right: 13px; }
.zones .col:nth-child(2) { width: 119px; margin-right: 12px; }
.zones .col:nth-child(3) { width: 132px; }
.adapt .col { width: 159px; }
.surface .col { width: 89px; }
.tick { gap: 6px; padding-top: 0; }
.tick input { appearance: none; width: 14px; height: 14px; margin: 0 0 0 -2px; border: 1px solid #b9bcc2; background: #fff; }

.work { display: flex; flex: 1; min-height: 0; }
.outline { display: flex; flex-direction: column; flex: none; width: 508px; background: #ecebf0; }
.outline-head { display: flex; justify-content: space-between; align-items: center; height: 24px; padding: 0 4px 0 3px; }
.outline-head h2 { font-size: 13px; line-height: 18px; color: #5a6580; }
.filter { margin: 10px 7px 0 0; height: 31px; border: 0; border-radius: 0 15px 15px 0; background: #fafafa; padding: 2px 0 0 2px; }
.filter::placeholder { color: #777; opacity: 1; }
.tree-wrap { display: flex; flex: 1; margin-top: 8px; margin-right: 5px; }
.tree { flex: 1; padding-top: 13px; height: 789px; overflow: hidden; font: 14px/21px "Open Sans", "Noto Sans", sans-serif; }
.tree li { height: 21px; display: flex; white-space: nowrap; color: #16161c; }
.tree .cut { margin-left: -4px; }
.node { display: flex; align-items: center; gap: 6px; }
.node svg { width: 15px; height: 16px; }
.l1 { margin-left: -1px; }
.l2 { margin-left: 15px; width: 186px; }
.l2 .node { padding-left: 4px; }
.sel { background: #bbc7d9; }
.tree .strong { font: 700 13px/16px "Liberation Mono", monospace; margin-left: -1px; }
.scroll { display: flex; flex-direction: column; width: 15px; background: #c1cad0; }
.scroll button { display: flex; justify-content: center; align-items: center; height: 20px; background: #a5b3bd; }
.thumb { flex: 550; background: #5c6070; }
.track { flex: 212; }

.right { flex: 1; display: flex; flex-direction: column; min-width: 0; }
.upper { display: flex; flex: 1; }
.side { display: flex; flex-direction: column; gap: 5px; width: 39px; padding: 3px 0 0 9px; }
.grip { flex: none; width: 5px; height: 17px; margin: 0 1px 0 5px; background: radial-gradient(circle at 1px 1px, #c6c9ce 1px, transparent 1px) 0 0 / 4px 4px; }
.grip.flat { width: 18px; height: 6px; margin: 2px 0 -1px 9px; }
.side .tool + .grip.flat { margin-top: 5px; margin-bottom: 0; }
.side .grip.flat + .grip.flat { margin-top: 6px; }
.tool { flex: none; display: flex; align-items: center; justify-content: center; width: 29px; height: 29px; box-sizing: border-box; border: 1px solid #9a9fa8; border-radius: 5px; background: #fff; }
.tool.on { width: 33px; height: 33px; border: 3px solid #9ba3ac; border-radius: 4px; }
.tool svg { width: 18px; height: 18px; overflow: visible; }
.viewport { position: relative; flex: 1; background: linear-gradient(#cbd1e2, #d9ddea 32%, #e9ecf4 62%, #fafbfd 90%, #fff); }
.scene { position: absolute; inset: 0; width: 100%; height: 100%; }
.badge { position: absolute; left: 4px; top: 3px; width: 17px; height: 17px; }
.viewport h1 { position: relative; padding: 5px 0 0 95px; text-align: center; font-size: 13px; line-height: 16px; color: #333; }
.popup { position: absolute; left: 0; top: 104px; width: 333px; height: 159px; box-sizing: border-box; padding: 6px 0 0 4px; background: rgba(239, 239, 243, .88); border: solid rgba(247, 248, 251, .7); border-width: 3px 4px 4px 0; background-clip: padding-box; color: #44454b; }
.row { display: flex; align-items: center; margin-bottom: 11px; }
.row input { height: 18px; border: 1px solid #c3c4ca; border-radius: 4px; background: #e4e4e9; padding: 2px 2px 0; }
.row .name { width: 192px; }
.row .zone { width: 244px; }
.close { margin: 0 18px 0 auto; }
.field { margin: -5px 0 6px; gap: 2px; }
.field + .field { margin-top: 0; }
.field label { flex: none; margin-top: -4px; }
.row.field input { flex: 1; height: 23px; background: #f4f4f8; }
.field .tri { margin: 0 19px 0 7px; border-width: 5px 5px 0; border-top-color: #808288; }
.flux { padding-left: 26px; }
.morelink { display: block; margin: 13px 17px 0 auto; font-size: 13px; font-weight: 700; color: #83868d; }

.toolbar { position: relative; display: flex; align-items: center; gap: 5px; height: 52px; padding: 4px 0 0 2px; background: #fff; }
.toolbar .tool svg { width: 20px; }
.toolbar .push { margin-left: auto; }
.toolbar .all { width: 187px; height: 24px; border: 1px solid #a8acb2; border-right: 0; border-radius: 5px 0 0 5px; background: #fff; padding: 2px 5px 0; }
.ime { position: absolute; right: 0; top: 10px; display: flex; align-items: center; gap: 14px; width: 125px; height: 32px; padding-left: 7px; overflow: hidden; background: #f0f0f3; color: #111; font: 20px/30px "Noto Sans CJK SC", sans-serif; }
.ime .bars { flex: none; width: 1px; height: 16px; border: solid #999; border-width: 0 1px; margin-right: -3px; }
.console { margin-left: 3px; background: #bfc4cb; padding-bottom: 5px; }
.console h2 { height: 23px; padding-left: 8px; font-size: 13px; line-height: 25px; color: #5d6b7d; }
.log { height: 143px; padding: 3px 0 0 4px; background: #f8f7fa; border-radius: 4px 0 0 4px; color: #222; font-size: 13px; }
.log p { display: flex; height: 16px; white-space: nowrap; }
.c24 { width: 192px; } .c48 { width: 384px; } .c7 { width: 56px; } .c8 { width: 64px; }

.taskbar { display: flex; height: 40px; background: #2f3a2a; color: #fff; font: 15px/20px "Open Sans", "Noto Sans CJK SC", sans-serif; }
.find { flex: none; width: 296px; border: solid #c8c8c8; border-width: 1px 0; background: #f2f2f2; color: #333; font: 14px/20px "Noto Sans CJK SC", sans-serif; padding: 0; text-indent: -8px; }
.apps { display: flex; flex: none; width: 1180px; }
.apps button { flex: 1; display: flex; align-items: center; justify-content: center; border: solid transparent; border-width: 2px 0 3px; background-clip: border-box; }
.apps button:nth-child(1), .apps button:nth-child(2) { flex: 0 0 49px; }
.apps svg { width: 24px; height: 24px; }
.apps .run { border-bottom-color: #76b3e0; }
.apps .cur { background: #5b6257; border-top-color: #5b6257; }
.tray { display: flex; flex: none; align-items: center; padding-left: 22px; }
.tray svg { width: 24px; height: 22px; }
.tray svg:first-child { margin-right: 8px; }
.temp { width: 43px; font-size: 14px; }
.lang { font-size: 15px; margin-left: 3px; }
.clock { flex: 1; display: flex; flex-direction: column; min-width: 0; margin-left: 10px; overflow: hidden; font-size: 12px; line-height: 18px; white-space: nowrap; }
.time { padding-left: 22px; }
</style>
